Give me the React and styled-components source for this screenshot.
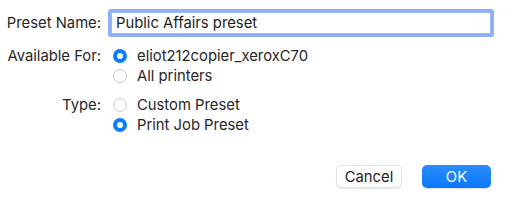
import React, { useState } from "react";
import styled, { createGlobalStyle } from "styled-components";

const GlobalStyle = createGlobalStyle`
  html, body {
    margin: 0;
    padding: 0;
    background: #ffffff;
  }
  body {
    font-family: Inter, "Liberation Sans", Arial, sans-serif;
    font-size: 14.8px;
    color: #262626;
  }
`;

const Sheet = styled.div`
  width: 512px;
  height: 207px;
  box-sizing: border-box;
  padding: 12px 21px 0 0;
  display: flex;
  flex-direction: column;
`;

const Form = styled.div`
  display: grid;
  grid-template-columns: 101px 1fr;
  column-gap: 12px;
  align-items: start;
`;

const Label = styled.div`
  text-align: right;
  line-height: ${(p) => p.$lh || 20}px;
  white-space: nowrap;
  color: #262626;
`;

const Field = styled.input`
  box-sizing: border-box;
  width: 380px;
  height: 22px;
  margin-left: -2px;
  padding: 0 4px;
  border: 1px solid #9ab9f4;
  border-radius: 1px;
  outline: none;
  box-shadow: 0 0 0 3px #8cb1f7;
  font: inherit;
  color: #1e1e1e;
`;

const Group = styled.div`
  display: flex;
  flex-direction: column;
`;

const Option = styled.label`
  display: flex;
  align-items: center;
  height: 20px;
  gap: 10px;
  cursor: default;
  white-space: nowrap;
`;

const Dot = styled.span`
  box-sizing: border-box;
  width: 14px;
  height: 14px;
  border-radius: 50%;
  flex: none;
  background: ${(p) => (p.$on ? "#ffffff" : "#fbfbfb")};
  border: ${(p) => (p.$on ? "4px solid #0a7cff" : "1px solid #cdcdcd")};
`;

const Spacer = styled.div`
  height: ${(p) => p.$h}px;
`;

const Buttons = styled.div`
  display: flex;
  justify-content: flex-end;
  gap: 20px;
  margin-top: 30px;
`;

const Button = styled.button`
  box-sizing: border-box;
  height: 23px;
  width: ${(p) => p.$w}px;
  border-radius: 5px;
  font: inherit;
  padding: 0;
  border: ${(p) => (p.$primary ? "none" : "1px solid #e3e3e3")};
  background: ${(p) => (p.$primary ? "linear-gradient(#2b8cff, #0a78fb)" : "#ffffff")};
  color: ${(p) => (p.$primary ? "#ffffff" : "#222222")};
  box-shadow: ${(p) => (p.$primary ? "0 1px 1px rgba(0,0,0,0.12)" : "0 1px 1px rgba(0,0,0,0.08)")};
`;

const Radio = ({ on, label, onClick }) => (
  <Option onClick={onClick}>
    <Dot $on={on} />
    <span>{label}</span>
  </Option>
);

export default function App() {
  const [printer, setPrinter] = useState(0);
  const [type, setType] = useState(1);

  return (
    <>
      <GlobalStyle />
      <Sheet>
        <Form>
          <Label $lh={22}>Preset Name:</Label>
          <Field defaultValue="Public Affairs preset" />
        </Form>
        <Spacer $h={12} />
        <Form>
          <Label>Available For:</Label>
          <Group>
            <Radio on={printer === 0} label="eliot212copier_xeroxC70" onClick={() => setPrinter(0)} />
            <Radio on={printer === 1} label="All printers" onClick={() => setPrinter(1)} />
          </Group>
        </Form>
        <Spacer $h={9} />
        <Form>
          <Label>Type:</Label>
          <Group>
            <Radio on={type === 0} label="Custom Preset" onClick={() => setType(0)} />
            <Radio on={type === 1} label="Print Job Preset" onClick={() => setType(1)} />
          </Group>
        </Form>
        <Buttons>
          <Button $w={66}>Cancel</Button>
          <Button $w={69} $primary>OK</Button>
        </Buttons>
      </Sheet>
    </>
  );
}
